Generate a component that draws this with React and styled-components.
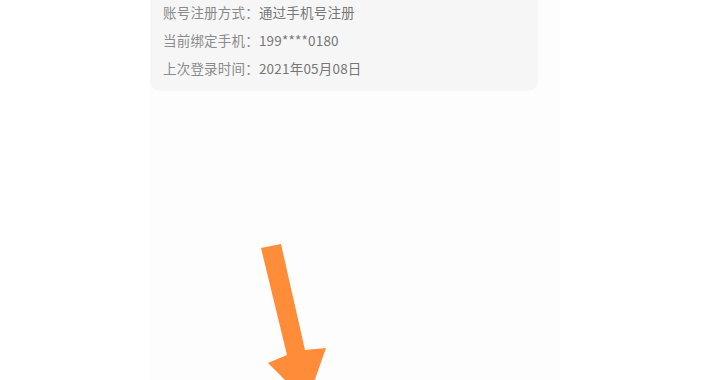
import React from "react";
import styled, { createGlobalStyle } from "styled-components";

const Global = createGlobalStyle`
  html, body {
    margin: 0;
    padding: 0;
    background: #ffffff;
  }
  body {
    font-family: "Noto Sans CJK SC", "Liberation Sans", sans-serif;
  }
`;

const Page = styled.div`
  position: relative;
  width: 720px;
  height: 380px;
  overflow: hidden;
  display: flex;
  justify-content: center;
  background: #ffffff;
`;

const Screen = styled.div`
  width: 410px;
  margin-left: -10px;
  height: 100%;
  background: #fdfdfd;
  box-sizing: border-box;
`;

const Card = styled.div`
  width: 388px;
  margin-top: -15px;
  padding: 13px 13px 9px;
  box-sizing: border-box;
  background: #f6f6f6;
  border-radius: 10px;
`;

const Row = styled.div`
  display: flex;
  height: 28px;
  align-items: center;
  font-size: 13.5px;
  letter-spacing: 0.2px;
`;

const Label = styled.span`
  color: #8a8a8a;
`;

const Value = styled.span`
  color: #777777;
`;

const Arrow = styled.svg`
  position: absolute;
  left: 250px;
  top: 240px;
`;

const rows = [
  ["账号注册方式：", "通过手机号注册"],
  ["当前绑定手机：", "199****0180"],
  ["上次登录时间：", "2021年05月08日"],
];

export default function App() {
  return (
    <Page>
      <Global />
      <Screen>
        <Card>
          {rows.map(([l, v]) => (
            <Row key={l}>
              <Label>{l}</Label>
              <Value>{v}</Value>
            </Row>
          ))}
        </Card>
      </Screen>
      <Arrow width="100" height="160" viewBox="0 0 100 160">
        <polygon
          points="11,8 31,4 55,110 76,108 57,162 18,123 37,115"
          fill="#ff8c38"
        />
      </Arrow>
    </Page>
  );
}
